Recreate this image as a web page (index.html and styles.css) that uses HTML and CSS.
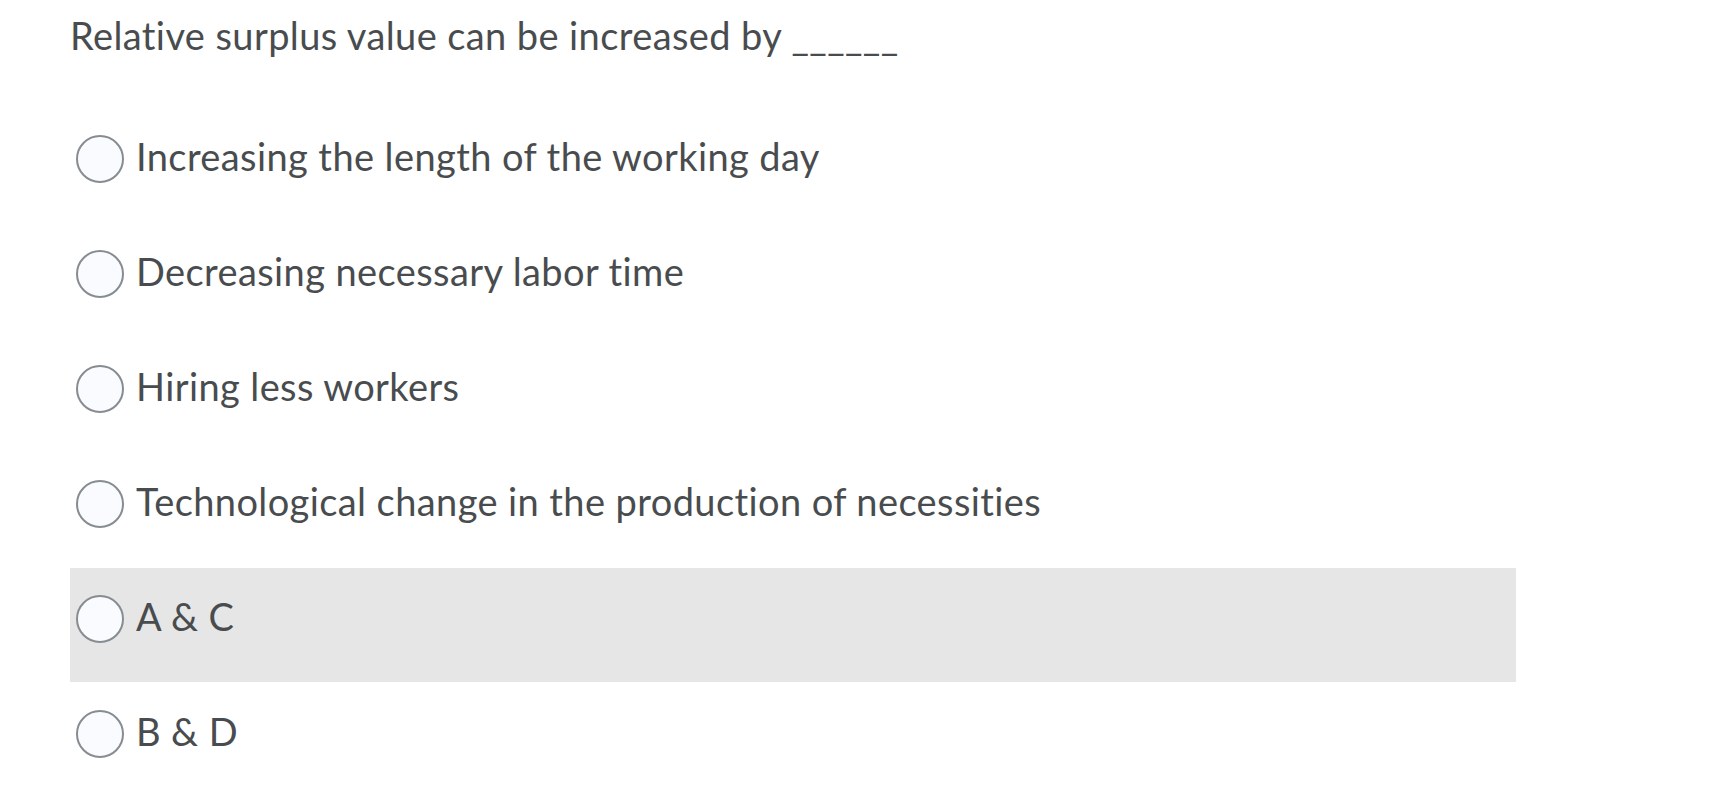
FILE: index.html
```html
<!DOCTYPE html>
<html>
<head>
<meta charset="utf-8">
<link rel="stylesheet" href="styles.css">
</head>
<body>
<div class="page">
  <div class="question">Relative surplus value can be increased by ______</div>
  <div class="options">
    <label class="option"><span class="radio"></span><span class="label">Increasing the length of the working day</span></label>
    <label class="option"><span class="radio"></span><span class="label">Decreasing necessary labor time</span></label>
    <label class="option"><span class="radio"></span><span class="label">Hiring less workers</span></label>
    <label class="option"><span class="radio"></span><span class="label">Technological change in the production of necessities</span></label>
    <label class="option option-hover"><span class="radio"></span><span class="label">A &amp; C</span></label>
    <label class="option"><span class="radio"></span><span class="label">B &amp; D</span></label>
  </div>
</div>
</body>
</html>
```
FILE: styles.css
```css
html, body {
  margin: 0;
  padding: 0;
  background: #ffffff;
}
.page {
  padding: 13px 0 0 70px;
  font-family: Lato, "Open Sans", sans-serif;
  color: #494c4e;
  letter-spacing: 0.4px;
}
.question {
  font-size: 38px;
  line-height: 44px;
  margin-bottom: 51px;
}
.options {
  display: flex;
  flex-direction: column;
  gap: 1px;
  width: 1446px;
}
.option {
  display: flex;
  align-items: flex-start;
  height: 48px;
  padding: 27px 6px 39px 6px;
  gap: 12px;
}
.option-hover {
  background: #e6e6e6;
}
.radio {
  flex: none;
  width: 44px;
  height: 44px;
  border: 2px solid #868c8f;
  border-radius: 50%;
  background: #f9fbff;
}
.label {
  font-size: 38px;
  line-height: 42px;
  white-space: nowrap;
}
```
